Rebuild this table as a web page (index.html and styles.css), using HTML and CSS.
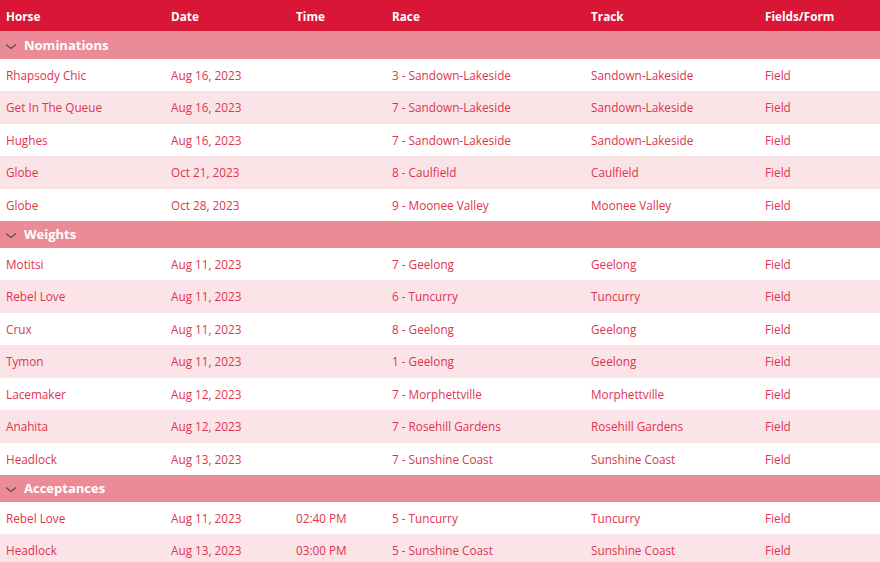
FILE: index.html
```html
<!DOCTYPE html>
<html>
<head>
<meta charset="utf-8">
<link rel="stylesheet" href="styles.css">
</head>
<body>
<div class="grid">
  <div class="row head">
    <div>Horse</div><div>Date</div><div>Time</div><div>Race</div><div>Track</div><div>Fields/Form</div>
  </div>

  <div class="group"><svg class="chev" width="12" height="7" viewBox="0 0 12 7"><path d="M1 1.5 L6 5.5 L11 1.5" fill="none" stroke="#5a4a4e" stroke-width="1.2"/></svg><span>Nominations</span></div>
  <div class="row"><div>Rhapsody Chic</div><div>Aug 16, 2023</div><div></div><div>3 - Sandown-Lakeside</div><div>Sandown-Lakeside</div><div>Field</div></div>
  <div class="row alt"><div>Get In The Queue</div><div>Aug 16, 2023</div><div></div><div>7 - Sandown-Lakeside</div><div>Sandown-Lakeside</div><div>Field</div></div>
  <div class="row"><div>Hughes</div><div>Aug 16, 2023</div><div></div><div>7 - Sandown-Lakeside</div><div>Sandown-Lakeside</div><div>Field</div></div>
  <div class="row alt"><div>Globe</div><div>Oct 21, 2023</div><div></div><div>8 - Caulfield</div><div>Caulfield</div><div>Field</div></div>
  <div class="row"><div>Globe</div><div>Oct 28, 2023</div><div></div><div>9 - Moonee Valley</div><div>Moonee Valley</div><div>Field</div></div>

  <div class="group"><svg class="chev" width="12" height="7" viewBox="0 0 12 7"><path d="M1 1.5 L6 5.5 L11 1.5" fill="none" stroke="#5a4a4e" stroke-width="1.2"/></svg><span>Weights</span></div>
  <div class="row"><div>Motitsi</div><div>Aug 11, 2023</div><div></div><div>7 - Geelong</div><div>Geelong</div><div>Field</div></div>
  <div class="row alt"><div>Rebel Love</div><div>Aug 11, 2023</div><div></div><div>6 - Tuncurry</div><div>Tuncurry</div><div>Field</div></div>
  <div class="row"><div>Crux</div><div>Aug 11, 2023</div><div></div><div>8 - Geelong</div><div>Geelong</div><div>Field</div></div>
  <div class="row alt"><div>Tymon</div><div>Aug 11, 2023</div><div></div><div>1 - Geelong</div><div>Geelong</div><div>Field</div></div>
  <div class="row"><div>Lacemaker</div><div>Aug 12, 2023</div><div></div><div>7 - Morphettville</div><div>Morphettville</div><div>Field</div></div>
  <div class="row alt"><div>Anahita</div><div>Aug 12, 2023</div><div></div><div>7 - Rosehill Gardens</div><div>Rosehill Gardens</div><div>Field</div></div>
  <div class="row"><div>Headlock</div><div>Aug 13, 2023</div><div></div><div>7 - Sunshine Coast</div><div>Sunshine Coast</div><div>Field</div></div>

  <div class="group"><svg class="chev" width="12" height="7" viewBox="0 0 12 7"><path d="M1 1.5 L6 5.5 L11 1.5" fill="none" stroke="#5a4a4e" stroke-width="1.2"/></svg><span>Acceptances</span></div>
  <div class="row"><div>Rebel Love</div><div>Aug 11, 2023</div><div>02:40 PM</div><div>5 - Tuncurry</div><div>Tuncurry</div><div>Field</div></div>
  <div class="row alt"><div>Headlock</div><div>Aug 13, 2023</div><div>03:00 PM</div><div>5 - Sunshine Coast</div><div>Sunshine Coast</div><div>Field</div></div>
</div>
</body>
</html>
```

FILE: styles.css
```css
html, body {
  margin: 0;
  padding: 0;
  background: #ffffff;
}
body {
  font-family: "Open Sans", "Liberation Sans", sans-serif;
  font-size: 11.75px;
  color: #e0334f;
}
.grid {
  display: flex;
  flex-direction: column;
  width: 880px;
}
.row {
  display: grid;
  grid-template-columns: 165px 125px 96px 199px 174px 1fr;
  align-items: center;
  height: 32.5px;
  padding-left: 6px;
  background: #ffffff;
}
.row.alt {
  background: #fbe4e8;
}
.row > div {
  white-space: nowrap;
}
.row.head {
  height: 32px;
  background: #d91636;
  color: #ffffff;
  font-weight: 700;
  border-bottom: 1px solid #e8949f;
  box-sizing: border-box;
}
.group {
  display: flex;
  align-items: center;
  height: 26.5px;
  background: #eb8b98;
  color: #ffffff;
  font-weight: 700;
  font-size: 13px;
  padding-left: 5px;
}
.chev {
  margin-right: 7px;
  margin-top: 2px;
}
```
